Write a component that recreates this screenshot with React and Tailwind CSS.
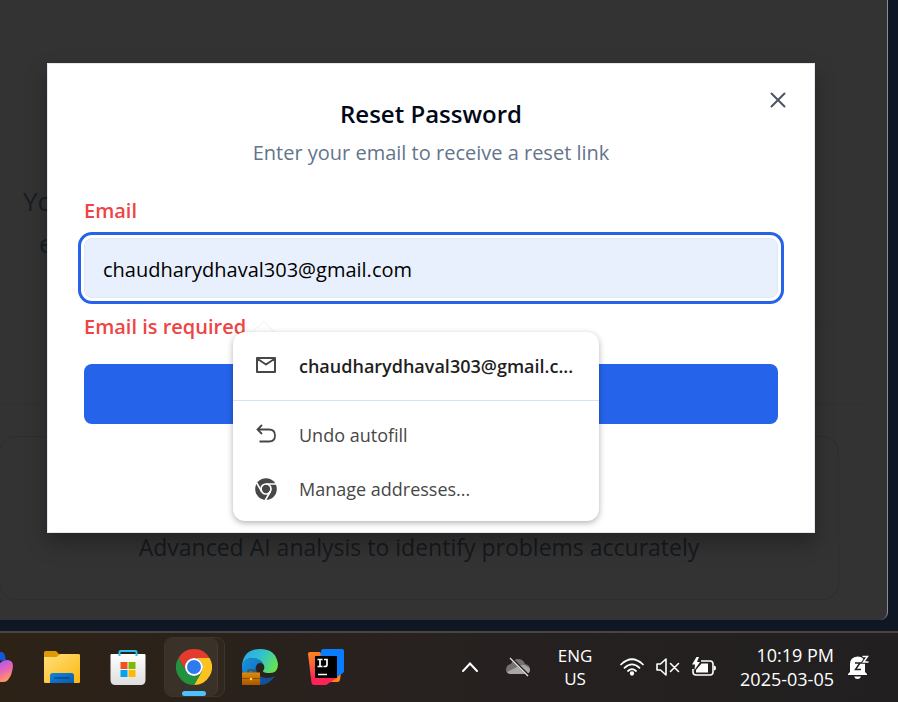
import React from "react";

function CopilotIcon() {
  return (
    <svg viewBox="0 0 14 36" className="h-9 w-3.5 shrink-0" aria-hidden="true">
      <defs>
        <linearGradient id="copilotBody" x1="0" y1="0" x2="0.3" y2="1">
          <stop offset="0" stopColor="#a259f7" />
          <stop offset="0.5" stopColor="#e763b8" />
          <stop offset="1" stopColor="#ff9a5c" />
        </linearGradient>
      </defs>
      <path d="M0 3h1.500q2.500 0 3.500 4l1 4.500H0z" fill="#1456d8" />
      <path d="M0 14q3-3 7-3 6 0 6 6-1 9-4 12.500-2 3.500-6 3.500H0z" fill="url(#copilotBody)" />
    </svg>
  );
}

function FolderIcon() {
  return (
    <svg viewBox="0 0 36 36" className="size-9" aria-hidden="true">
      <defs>
        <linearGradient id="folderFront" x1="0" y1="0" x2="1" y2="1">
          <stop offset="0" stopColor="#ffdf7c" />
          <stop offset="1" stopColor="#fbb80f" />
        </linearGradient>
        <linearGradient id="folderTray" x1="0" y1="0" x2="1" y2="1">
          <stop offset="0" stopColor="#1384dc" />
          <stop offset="1" stopColor="#075cae" />
        </linearGradient>
      </defs>
      <path d="M0 3.500q0-1.500 1.500-1.500H12l3.500 3.500H36V14H0z" fill="#dc9a05" />
      <path d="M0 8h12.500L16 5h18.500Q36 5 36 6.500V33q0 1-1.500 1h-33Q0 34 0 33z" fill="url(#folderFront)" />
      <path d="M6 34v-7.500Q6 24 8.500 24h19q2.500 0 2.500 2.500V34z" fill="url(#folderTray)" />
      <path d="M11 29h14" stroke="#064a8c" strokeWidth="1.500" strokeLinecap="round" />
    </svg>
  );
}

function StoreIcon() {
  return (
    <svg viewBox="0 0 36 36" className="size-9" aria-hidden="true">
      <defs>
        <linearGradient id="storeBag" x1="0" y1="0" x2="0" y2="1">
          <stop offset="0" stopColor="#ffffff" />
          <stop offset="1" stopColor="#dedede" />
        </linearGradient>
      </defs>
      <path d="M.5 6q0-1 1-1h33q1 0 1 1v25q0 5-5 5h-25q-5 0-5-5z" fill="url(#storeBag)" />
      <path d="M9.500 7V3q0-1 1-1h15q1 0 1 1v4" fill="none" stroke="#2fbff2" strokeWidth="2" />
      <path d="M10.500 13h7v7h-7z" fill="#f25022" />
      <path d="M18.500 13h7v7h-7z" fill="#7fba00" />
      <path d="M10.500 21h7v7h-7z" fill="#00a4ef" />
      <path d="M18.500 21h7v7h-7z" fill="#ffb900" />
    </svg>
  );
}

function ChromeIcon() {
  return (
    <svg viewBox="0 0 36 36" className="size-9" aria-hidden="true">
      <path d="M2.410 9A18 18 0 0 1 33.590 9H18A9 9 0 0 0 10.210 22.500z" fill="#e33b2e" />
      <path d="M33.590 9A18 18 0 0 1 18 36L25.790 22.500A9 9 0 0 0 18 9z" fill="#fcc31e" />
      <path d="M18 36A18 18 0 0 1 2.410 9L10.210 22.500A9 9 0 0 0 25.790 22.500z" fill="#23923f" />
      <circle cx="18" cy="18" r="9" fill="#fff" />
      <circle cx="18" cy="18" r="7" fill="#2f7bed" />
    </svg>
  );
}

function EdgeIcon() {
  return (
    <svg viewBox="0 0 36 36" className="size-9" aria-hidden="true">
      <defs>
        <linearGradient id="edgeTop" x1="0" y1="0.200" x2="1" y2="0.600">
          <stop offset="0" stopColor="#2aa6ea" />
          <stop offset="0.500" stopColor="#30c3d0" />
          <stop offset="1" stopColor="#66e34d" />
        </linearGradient>
        <linearGradient id="edgeMid" x1="0" y1="0" x2="1" y2="1">
          <stop offset="0" stopColor="#1a94e4" />
          <stop offset="1" stopColor="#0861ad" />
        </linearGradient>
        <linearGradient id="edgeCase" x1="0" y1="0" x2="0" y2="1">
          <stop offset="0" stopColor="#e08a0a" />
          <stop offset="1" stopColor="#a85600" />
        </linearGradient>
      </defs>
      <path d="M14 20Q16 29 25 29Q29 29 33 27Q27 36 18 36L13 34z" fill="#12509a" />
      <path d="M0 15Q4 9 11 9Q18 9 21 15Q16 12 14 17.500Q12 26 20 32L12 36Q0 34 0 18z" fill="url(#edgeMid)" />
      <path d="M0 16Q2 0 18 0Q34 0 36 15Q36 24 28 24Q20.500 24 21 22Q23.500 19 21.500 15.500Q18 9 10.500 9Q3 9 0 16z" fill="url(#edgeTop)" />
      <path d="M6 24v-2q0-1 1-1h4q1 0 1 1v2" fill="none" stroke="#6b3a05" strokeWidth="1.200" />
      <path d="M0 23.500h18V36H0z" fill="url(#edgeCase)" />
      <path d="M0 29.500h18" stroke="#8c4a04" />
      <circle cx="9" cy="30" r="1.300" fill="#ffe14a" />
    </svg>
  );
}

function IntelliJIcon() {
  return (
    <svg viewBox="0 0 36 36" className="size-9" aria-hidden="true">
      <defs>
        <linearGradient id="ijLeft" x1="0" y1="0" x2="0.300" y2="1">
          <stop offset="0" stopColor="#ff8a1c" />
          <stop offset="0.450" stopColor="#fb5a3e" />
          <stop offset="0.750" stopColor="#ff2457" />
        </linearGradient>
      </defs>
      <path d="M20 28l13-4-1 7q-.5 2-2.500 2H20z" fill="#ff8612" />
      <path d="M0 5q0-2 2-2h10l14 24-8 9H6q-2 0-2.500-2.500z" fill="url(#ijLeft)" />
      <path d="M15 0h19q2 0 2 2v20q0 1-1 2l-9 6-14-18 1-10q.5-2 2-2z" fill="#087cfa" />
      <path d="M12 29h17l-11 7H6q2-5 6-7z" fill="#ff2457" />
      <path d="M7 7h22v22H7z" fill="#000" />
      <path d="M9.500 10.500h5M12 10.500v7M9.500 17.500h5M16 10.500h3v5q0 2-2 2h-1.500M10 25.500h9" fill="none" stroke="#fff" strokeWidth="1.700" />
    </svg>
  );
}

function CloudOffIcon() {
  return (
    <svg viewBox="0 0 24 20" className="h-5 w-6" aria-hidden="true">
      <path d="M5 7q2-5 7-5 5 0 7 5 5 1 5 5 0 5-5 5H5q-5 0-5-4 0-5 5-6z" fill="#747270" />
      <path d="M1 15l12-6q5-2 8 .5 3 1.500 3 3 0 4.500-5 4.500H5q-3 0-4-2z" fill="#aaa8a6" />
      <path d="M4.500.5l18 18" stroke="#211e1c" strokeWidth="2.500" />
      <path d="M4 1l18 18" stroke="#e8e8e8" strokeWidth="1.300" />
    </svg>
  );
}

function WifiIcon() {
  return (
    <svg viewBox="0 0 24 18" className="h-[18px] w-6" fill="none" stroke="#fff" strokeWidth="1.700" strokeLinecap="round" aria-hidden="true">
      <path d="M1 6.500Q12-4 23 6.500M4.500 9.800q7.500-7 15 0M8 13q4-3.600 8 0" />
      <circle cx="12" cy="15.500" r="1.300" fill="#fff" />
    </svg>
  );
}

function MutedIcon() {
  return (
    <svg viewBox="0 0 24 20" className="h-5 w-6" fill="none" stroke="#fff" strokeWidth="1.600" strokeLinejoin="round" strokeLinecap="round" aria-hidden="true">
      <path d="M1 7h3.500L10 2v16l-5.500-5H1zM14.500 6.500l8 8M22.500 6.500l-8 8" />
    </svg>
  );
}

function BatteryIcon() {
  return (
    <svg viewBox="0 0 24 20" className="h-5 w-6" aria-hidden="true">
      <path d="M9 4h9q3 0 3 3v8q0 3-3 3H4q-3 0-3-3v-3" fill="none" stroke="#fff" strokeWidth="1.600" />
      <path d="M22 8.500q2 0 2 2.500t-2 2.500z" fill="#fff" />
      <path d="M9.500 6.500h6.500v9H4V13z" fill="#fff" />
      <path d="M4.500 0L0 7.500h3L2.500 13 8 5H5l2-5z" fill="#fff" />
    </svg>
  );
}

function SnoozeBellIcon() {
  return (
    <svg viewBox="0 0 22 24" className="h-6 w-[22px]" fill="none" aria-hidden="true">
      <path d="M2 17V9q0-7 7.500-7.500Q17 1.500 17 9v8l2 2v1H0v-1z" fill="#fff" />
      <path d="M6 21.500h7q-1 2.500-3.500 2.500T6 21.500z" fill="#fff" />
      <path d="M14.500 1.500h5L15.500 7h5" stroke="#211e1e" strokeWidth="3.500" />
      <path d="M14.500 1.500h5L15.500 7h5" stroke="#fff" strokeWidth="1.500" />
      <path d="M7 8h5L7.500 14.500h5.500" stroke="#211e1e" strokeWidth="1.500" />
    </svg>
  );
}

function MailIcon() {
  return (
    <svg viewBox="0 0 22 22" className="size-[22px] shrink-0" fill="none" stroke="#474747" strokeWidth="2" strokeLinejoin="round" aria-hidden="true">
      <path d="M2 3h18v14H2zM2 3.500l9 6 9-6" />
    </svg>
  );
}

function UndoIcon() {
  return (
    <svg viewBox="0 0 22 22" className="size-[22px] shrink-0" fill="none" stroke="#474747" strokeWidth="1.800" aria-hidden="true">
      <path d="M7 1L2.500 5.500 7 10M2.500 5.500H14q6 0 6 6t-6 6H4.500" />
    </svg>
  );
}

function ChromeMonoIcon() {
  return (
    <svg viewBox="0 0 22 22" className="size-[22px] shrink-0" aria-hidden="true">
      <circle cx="11" cy="11" r="10.800" fill="#474747" />
      <circle cx="11" cy="11" r="5" fill="none" stroke="#fff" strokeWidth="1.700" />
      <path d="M11 6h10M6.670 13.500L1.670 4.840M15.330 13.500l-5 8.660" stroke="#fff" strokeWidth="1.700" />
    </svg>
  );
}

function AutofillPopup() {
  return (
    <div className="absolute left-[149px] right-[179px] top-[34px] z-10">
      <div className="absolute -top-2 left-[22px] size-[17px] rotate-45 border border-gray-100 bg-white" />
      <div className="relative overflow-hidden rounded-xl bg-white shadow-[0_2px_6px_rgba(0,0,0,0.3)]">
        <button type="button" className="flex h-[69px] w-full items-center gap-[22px] border-b border-[#d3e3fd] px-[22px] text-left font-semibold text-[#1f1f1f]">
          <MailIcon />
          <span className="whitespace-nowrap text-lg">chaudharydhaval303@gmail.c...</span>
        </button>
        <div className="pb-[5px] pt-[7px] text-[#474747]">
          <button type="button" className="flex h-[54px] w-full items-center gap-[22px] px-[22px] text-left">
            <UndoIcon />
            <span className="text-lg">Undo autofill</span>
          </button>
          <button type="button" className="flex h-[54px] w-full items-center gap-[22px] px-[22px] text-left">
            <ChromeMonoIcon />
            <span className="text-lg">Manage addresses...</span>
          </button>
        </div>
      </div>
    </div>
  );
}

function ResetDialog() {
  return (
    <section role="dialog" aria-labelledby="dialog-title" className="relative w-full border border-slate-200 bg-white px-9 pb-[108px] pt-[34px] shadow-[0_10px_20px_rgba(0,0,0,0.3)]">
      <button type="button" aria-label="Close" className="absolute right-7 top-7 text-[#4b5563]">
        <svg viewBox="0 0 16 16" className="size-4" fill="none" stroke="currentColor" strokeWidth="2" strokeLinecap="round" aria-hidden="true">
          <path d="M1.500 1.500l13 13M14.500 1.500l-13 13" />
        </svg>
      </button>
      <header className="text-center">
        <h2 id="dialog-title" className="text-2xl font-semibold text-[#020817]">Reset Password</h2>
        <p className="mt-[9px] text-xl leading-7 text-[#64748b]">Enter your email to receive a reset link</p>
      </header>
      <form className="mt-8" onSubmit={(event) => event.preventDefault()}>
        <label htmlFor="email" className="block text-xl leading-6 font-semibold text-[#ef4444]">Email</label>
        <input
          id="email"
          type="email"
          defaultValue="chaudharydhaval303@gmail.com"
          aria-describedby="email-error"
          className="mt-[15px] block h-[60px] w-full rounded-lg border border-slate-200 bg-[#e8f0fe] px-[18px] pt-0.5 text-xl text-black outline-3 outline-offset-3 outline-[#2563eb]"
        />
        <div className="relative pt-[17px]">
          <p id="email-error" className="text-xl leading-6 font-semibold text-[#ef4444]">Email is required</p>
          <button type="submit" aria-label="Send reset link" className="mt-[25px] block h-[60px] w-full rounded-lg bg-[#2563eb]" />
          <AutofillPopup />
        </div>
      </form>
    </section>
  );
}

function PageBehind() {
  return (
    <div className="absolute inset-0 flex flex-col">
      <div className="flex h-[325px] flex-col items-start border-b border-[#313131] bg-linear-to-b from-[#333333] to-[#323332] pl-[23px] pt-[180px] text-[26px] leading-[42px] text-[#191d23]">
        <p>Yo</p>
        <p className="pl-4">e</p>
      </div>
      <div className="mr-6 h-20 border-b border-[#303030]" />
      <article className="-ml-px mr-12 mt-[31px] flex h-[164px] flex-col justify-end rounded-2xl border border-[#2e2e2e] pb-8 text-center text-[23px] leading-10 text-[#16191d]">
        <p>Advanced AI analysis to identify problems accurately</p>
      </article>
    </div>
  );
}

function Taskbar() {
  return (
    <footer className="flex h-[71px] items-center justify-between border-t-2 border-[#4a4542] bg-linear-to-r from-[#2d2216] via-[#272120] to-[#211f20] pb-0.5 pr-7 text-white">
      <nav aria-label="Pinned apps" className="flex items-center">
        <button type="button" aria-label="Copilot"><CopilotIcon /></button>
        <button type="button" aria-label="File Explorer" className="ml-[30px]"><FolderIcon /></button>
        <button type="button" aria-label="Microsoft Store" className="ml-[30px]"><StoreIcon /></button>
        <button type="button" aria-label="Google Chrome" className="ml-[18px] flex h-[60px] rounded-lg border border-[#3d342b] bg-[#30271e] pr-1.5">
          <span className="flex w-[53px] flex-col items-end justify-end gap-1.5 rounded-lg border-r border-[#463d34] bg-[#3a3128] pr-[5px]">
            <ChromeIcon />
            <span className="mr-1.5 h-[5px] w-6 rounded-full bg-[#4cc2ff]" />
          </span>
        </button>
        <button type="button" aria-label="Microsoft Edge" className="ml-[17px]"><EdgeIcon /></button>
        <button type="button" aria-label="IntelliJ IDEA" className="ml-[30px]"><IntelliJIcon /></button>
      </nav>
      <div className="flex items-center">
        <button type="button" aria-label="Show hidden icons">
          <svg viewBox="0 0 18 12" className="h-3 w-[18px]" fill="none" stroke="#fff" strokeWidth="2" strokeLinecap="round" aria-hidden="true">
            <path d="M2 10l7-7.500 7 7.500" />
          </svg>
        </button>
        <button type="button" aria-label="OneDrive" className="ml-[27px]"><CloudOffIcon /></button>
        <button type="button" className="ml-6 w-[42px] text-center text-[17px] leading-[23px]">ENG<br />US</button>
        <button type="button" aria-label="Network, volume and battery" className="ml-6 flex items-center gap-3">
          <WifiIcon />
          <MutedIcon />
          <BatteryIcon />
        </button>
        <button type="button" className="ml-6 text-right text-lg leading-6">10:19 PM<br />2025-03-05</button>
        <button type="button" aria-label="Notifications" className="ml-3.5"><SnoozeBellIcon /></button>
      </div>
    </footer>
  );
}

export default function App() {
  return (
    <div className="flex min-h-screen flex-col bg-[#0f1624] font-['Open_Sans',sans-serif]">
      <main className="relative mb-[11px] mr-2.5 flex-1 overflow-hidden rounded-br-lg border-r border-[#8b8d92] bg-[#333333]">
        <PageBehind />
        <div className="relative pb-[87px] pl-[47px] pr-[72px] pt-[63px]">
          <ResetDialog />
        </div>
      </main>
      <Taskbar />
    </div>
  );
}
